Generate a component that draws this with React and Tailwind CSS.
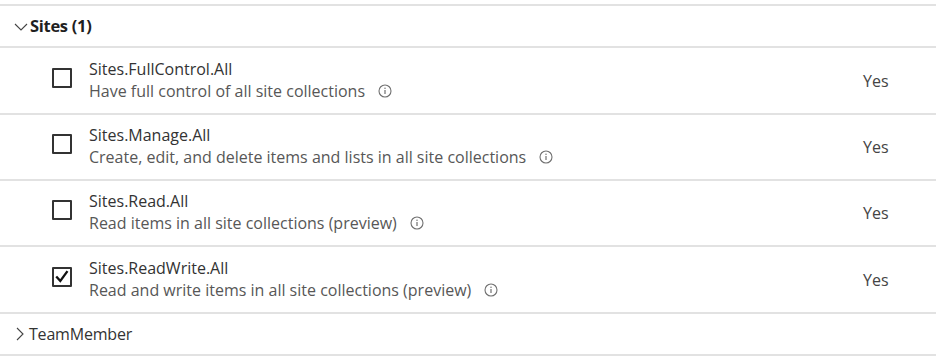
import React from "react";

const rows = [
  { name: "Sites.FullControl.All", desc: "Have full control of all site collections", checked: false, h: "h-[67px]" },
  { name: "Sites.Manage.All", desc: "Create, edit, and delete items and lists in all site collections", checked: false, h: "h-[66px]" },
  { name: "Sites.Read.All", desc: "Read items in all site collections (preview)", checked: false, h: "h-[66px]" },
  { name: "Sites.ReadWrite.All", desc: "Read and write items in all site collections (preview)", checked: true, h: "h-[67px]" },
];

function InfoIcon() {
  return (
    <svg width="14" height="14" viewBox="0 0 14 14" className="ml-[13px] shrink-0">
      <circle cx="7" cy="7" r="6" fill="none" stroke="#707070" strokeWidth="1.1" />
      <line x1="7" y1="6" x2="7" y2="10" stroke="#707070" strokeWidth="1.2" />
      <circle cx="7" cy="4.2" r="0.75" fill="#707070" />
    </svg>
  );
}

function Checkbox({ checked }) {
  return (
    <div className="w-[20px] h-[20px] border-2 border-[#333] rounded-[1px] flex items-center justify-center mb-[6px] shrink-0">
      {checked && (
        <svg width="14" height="14" viewBox="0 0 14 14">
          <path d="M2 7.4 L5.3 11 L11.8 2" fill="none" stroke="#111" strokeWidth="2.3" strokeLinecap="square" />
        </svg>
      )}
    </div>
  );
}

export default function App() {
  return (
    <div
      className="w-[936px] h-[364px] bg-white pt-[4px] overflow-hidden"
      style={{ fontFamily: '"Open Sans", "Noto Sans", sans-serif' }}
    >
      <div className="border-t-2 border-[#e2e2e2]">
        <div className="h-[42px] border-b-2 border-[#e2e2e2] flex items-center pl-[14px]">
          <svg width="14" height="10" viewBox="0 0 14 10" className="mr-[2px] mt-[1px]">
            <path d="M1 2 L7 8 L13 2" fill="none" stroke="#444" strokeWidth="1.1" />
          </svg>
          <span className="text-[16.5px] font-bold text-[#1f1f1f] tracking-[-0.3px]">Sites (1)</span>
        </div>
        {rows.map((r) => (
          <div key={r.name} className={`${r.h} border-b-2 border-[#e2e2e2] flex items-center`}>
            <div className="w-[52px] shrink-0" />
            <Checkbox checked={r.checked} />
            <div className="ml-[17px] flex flex-col leading-[22px] mb-[2px]">
              <span className="text-[16px] text-[#333]">{r.name}</span>
              <span className="text-[16px] text-[#575757] flex items-center">
                {r.desc}
                <InfoIcon />
              </span>
            </div>
            <div className="flex-1" />
            <span className="w-[73px] text-[16px] text-[#444]">Yes</span>
          </div>
        ))}
        <div className="h-[42px] border-b-2 border-[#e2e2e2] flex items-center pl-[15px]">
          <svg width="9" height="14" viewBox="0 0 9 14" className="mr-[5px]">
            <path d="M2 1 L8 7 L2 13" fill="none" stroke="#444" strokeWidth="1.1" />
          </svg>
          <span className="text-[16px] text-[#333] tracking-[-0.2px]">TeamMember</span>
        </div>
      </div>
    </div>
  );
}
